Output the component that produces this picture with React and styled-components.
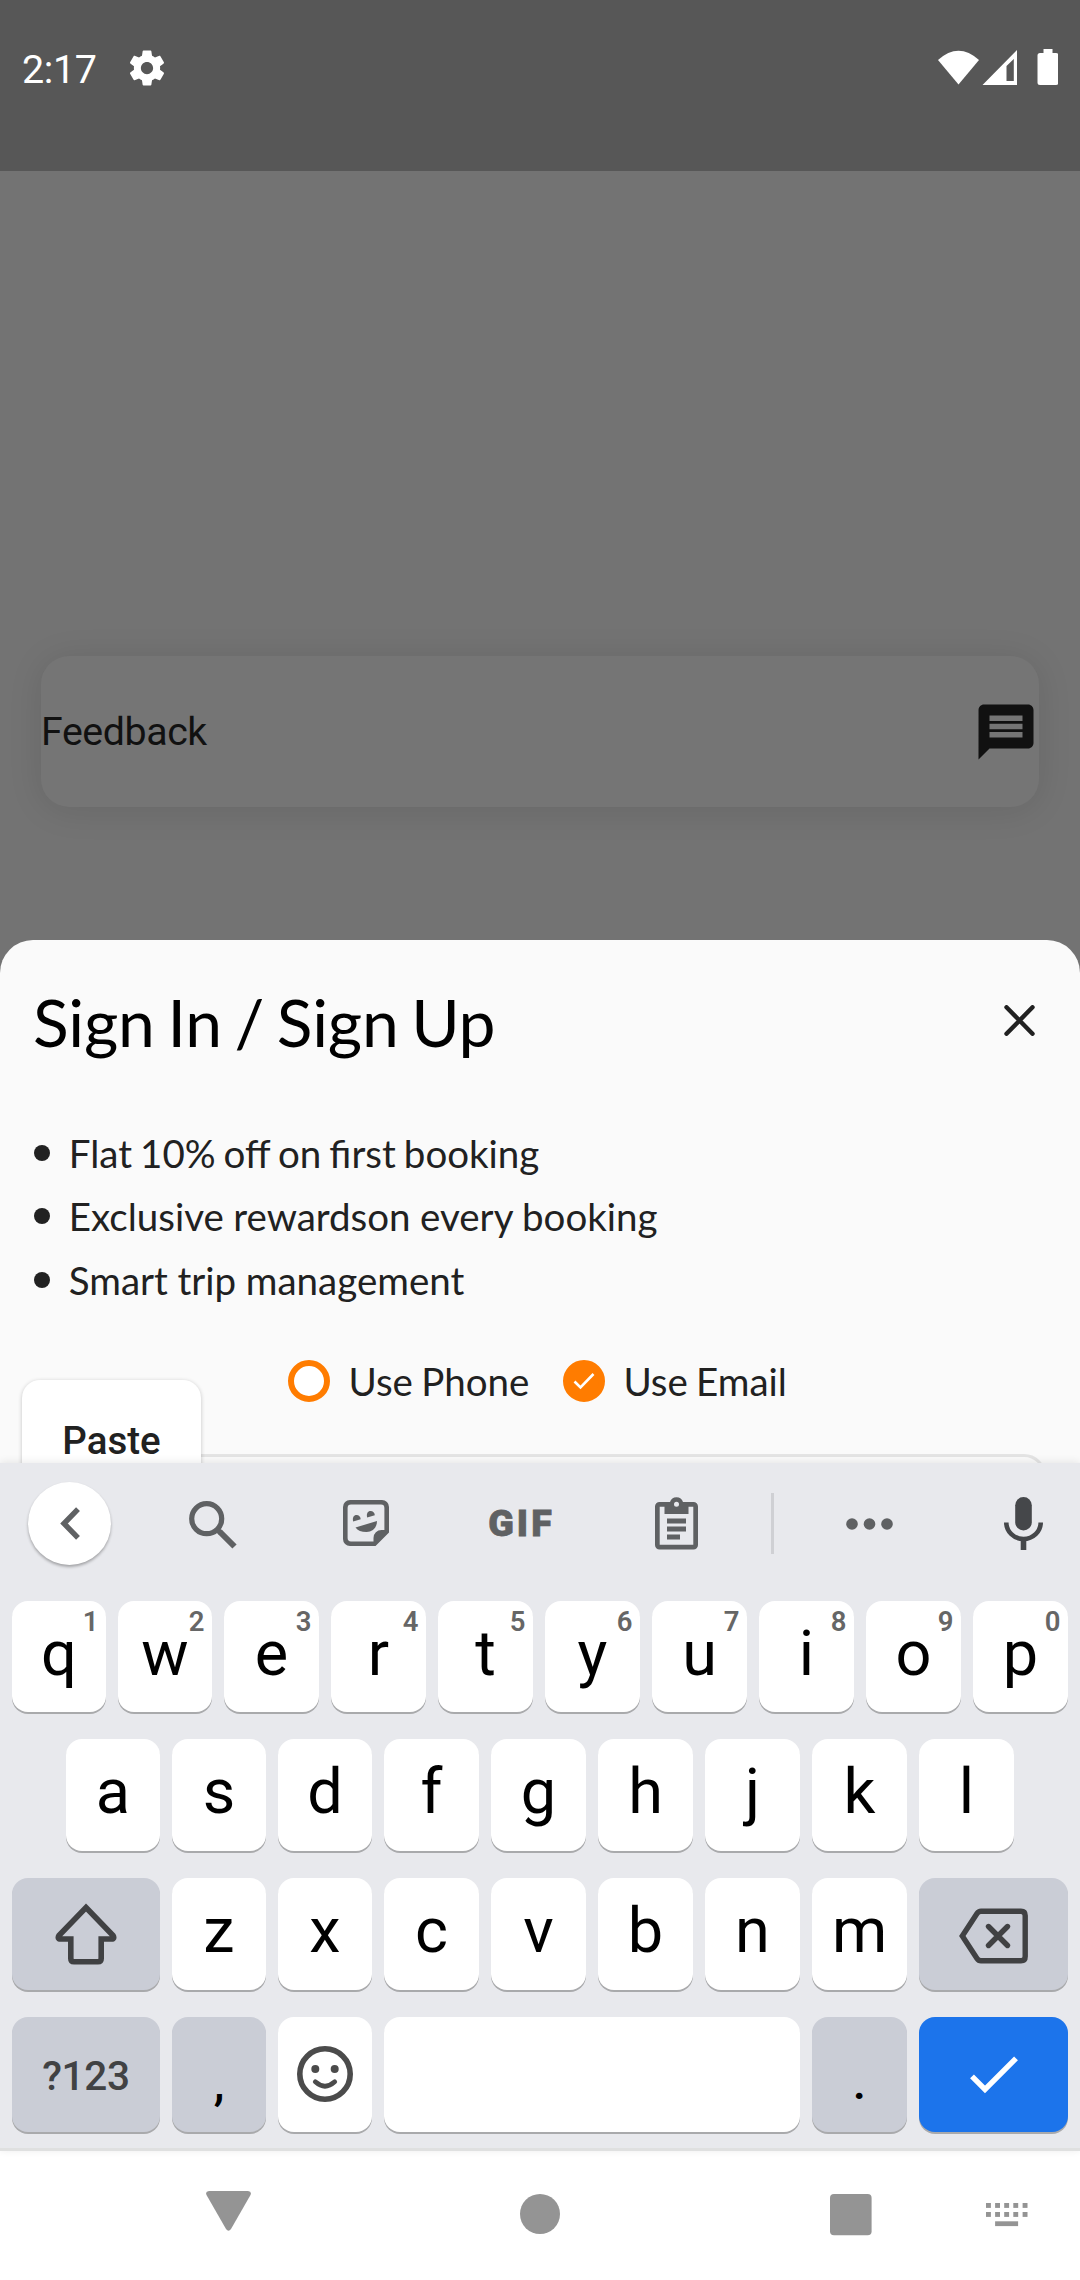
import React from "react";
import styled, { createGlobalStyle } from "styled-components";

const GlobalStyle = createGlobalStyle`
  *, *::before, *::after { box-sizing: border-box; }
  html, body { margin: 0; padding: 0; background: #fff; }
  svg { display: block; flex: none; }
`;

const ROBOTO = `Roboto, "Liberation Sans", sans-serif`;
const LATO = `Lato, "Open Sans", sans-serif`;

const Screen = styled.div`
  display: flex;
  flex-direction: column;
  width: 1080px;
  height: 2280px;
  overflow: hidden;
  font-family: ${ROBOTO};
`;

/* ---------- status bar ---------- */

const StatusBar = styled.header`
  display: flex;
  justify-content: space-between;
  align-items: flex-start;
  height: 171px;
  padding: 39px 22px 0;
  background: #575757;
  color: #fff;
`;

const StatusGroup = styled.div`
  display: flex;
  align-items: center;
  height: 57px;
`;

const Time = styled.span`
  width: 103.5px;
  padding-top: 4px;
  font-size: 39.5px;
  line-height: 53px;
  letter-spacing: -0.4px;
`;

/* ---------- dimmed page ---------- */

const Page = styled.main`
  display: flex;
  flex-direction: column;
  height: 1292px;
  padding-top: 485px;
  background: #737373;
`;

const FeedbackCard = styled.section`
  display: flex;
  align-items: center;
  justify-content: space-between;
  height: 151px;
  margin: 0 41px 132.5px 41px;
  border-radius: 28px;
  background: #757575;
  box-shadow: 0 3px 34px rgba(0, 0, 0, 0.1);
  color: #111;
  font-size: 39.3px;
  letter-spacing: -0.4px;
`;

/* ---------- sign-in sheet ---------- */

const Sheet = styled.section`
  position: relative;
  flex: 1;
  overflow: hidden;
  padding: 42px 34px 0;
  border-radius: 33px 33px 0 0;
  background: #fafafa;
  color: #212121;
  font-family: ${LATO};
`;

const SheetHeader = styled.div`
  display: flex;
  align-items: center;
  justify-content: space-between;
  height: 80px;
  padding-right: 11px;

  svg {
    margin-bottom: 2px;
  }
`;

const Title = styled.h1`
  margin: 0 0 0 -1px;
  color: #000;
  font-size: 66px;
  font-weight: 400;
  line-height: 80px;
  letter-spacing: -0.2px;
  word-spacing: -4px;
  white-space: nowrap;
`;

const PerkList = styled.ul`
  margin: 59.5px 0 0;
  padding: 0;
  list-style: none;
`;

const Perk = styled.li`
  display: flex;
  align-items: center;
  gap: 18.8px;
  height: 63.5px;
  font-size: 38.5px;
  word-spacing: ${(p) => p.$spacing}px;
  white-space: nowrap;

  &::before {
    content: "";
    width: 16px;
    height: 16px;
    border-radius: 50%;
    background: #212121;
  }
`;

const Choices = styled.div`
  display: flex;
  align-items: center;
  gap: 33.5px;
  height: 50px;
  margin-top: 44.5px;
  padding-left: 254px;
`;

const Choice = styled.label`
  display: flex;
  align-items: center;
  gap: 18.5px;
  font-size: 38.5px;
  line-height: 48px;
  word-spacing: -1.5px;
  white-space: nowrap;
`;

const Radio = styled.span`
  display: flex;
  align-items: center;
  justify-content: center;
  width: 42px;
  height: 42px;
  border: 6px solid #ff7c00;
  border-radius: 50%;
  background: ${(p) => (p.$on ? "#ff7c00" : "#fff")};
`;

const EmailField = styled.div`
  height: 120px;
  margin-top: 48px;
  border: 3px solid #e4e4e4;
  border-radius: 22px;
`;

const PastePopup = styled.div`
  position: absolute;
  left: 22px;
  top: 440.5px;
  width: 179px;
  height: 120px;
  border-radius: 18px;
  background: #fff;
  box-shadow: 0 1px 4px rgba(0, 0, 0, 0.22);
  font: 500 38.5px/121px ${ROBOTO};
  text-align: center;
`;

/* ---------- keyboard ---------- */

const Keyboard = styled.section`
  position: relative;
  height: 688px;
  border-bottom: 3px solid #dfe0e0;
  background: #e8e9ed;
  box-shadow: 0 -1px 8px rgba(0, 0, 0, 0.09);
`;

const Toolbar = styled.div`
  display: grid;
  grid-template-columns: 139px 147px 160px 148px 165px 27px 167px 1fr;
  align-items: center;
  justify-items: center;
  height: 138px;
  padding-bottom: 18px;
  color: #5f6163;
`;

const BackButton = styled.button`
  display: flex;
  align-items: center;
  justify-content: center;
  width: 83px;
  height: 83px;
  padding: 0;
  border: 0;
  border-radius: 50%;
  background: #fff;
  color: inherit;
  box-shadow: 0 2px 3px rgba(0, 0, 0, 0.3);
`;

const SearchSlot = styled.span`
  padding-top: 3px;
`;

const GifLabel = styled.span`
  padding-left: 3px;
  font-size: 37.5px;
  font-weight: 900;
  line-height: 40px;
  letter-spacing: 3px;
  -webkit-text-stroke: 0.8px currentColor;
`;

const Divider = styled.span`
  width: 3px;
  height: 61px;
  background: #cfd0d4;
`;

const MicSlot = styled.span`
  padding-left: 14px;
`;

const Keys = styled.div`
  display: grid;
  grid-template-rows: 111px 112px 112px 115px;
  row-gap: 27px;
`;

const KeyRow = styled.div`
  display: flex;
  gap: 12px;
  padding-left: ${(p) => (p.$inset ? 66 : 12)}px;
`;

const keyColors = { light: "#fff", dark: "#cacdd6", accent: "#1c74eb" };

const Key = styled.button`
  position: relative;
  display: flex;
  align-items: center;
  justify-content: center;
  flex: none;
  width: ${(p) => p.$width || 95}px;
  margin: 0;
  padding: 0 0 ${(p) => (p.$lift ? p.$lift : 0)}px;
  border: 0;
  border-radius: 16px;
  background: ${(p) => keyColors[p.$tone || "light"]};
  box-shadow: 0 2px 0 #a9aaac;
  color: #000;
  font: 400 63px/76px ${ROBOTO};

  svg {
    position: relative;
    top: ${(p) => (p.$nudge ? p.$nudge : 0)}px;
  }
`;

const Hint = styled.span`
  position: absolute;
  top: 4px;
  right: 7.5px;
  color: #666;
  font-size: 27.5px;
  font-weight: 600;
  line-height: 33px;
`;

const SymbolsLabel = styled.span`
  padding-top: 2px;
  color: #414244;
  font-size: 40.5px;
  font-weight: 500;
  letter-spacing: -0.3px;
`;

const Punctuation = styled.span`
  padding-top: 17px;
  font-size: 48px;
  font-weight: 500;
`;

/* ---------- navigation bar ---------- */

const NavBar = styled.nav`
  display: flex;
  align-items: flex-start;
  gap: 269px;
  flex: 1;
  padding: 40px 0 0 206px;
  background: #fff;
  color: #949494;
`;

const RecentGroup = styled.div`
  display: flex;
  gap: 114px;
  margin-left: 1px;
`;

/* ---------- icons ---------- */

const Gear = () => (
  <svg width="42" height="42" viewBox="0 0 24 24" fill="currentColor">
    <path d="M19.43 12.98c.04-.32.07-.64.07-.98s-.03-.66-.07-.98l2.11-1.65c.19-.15.24-.42.12-.64l-2-3.46c-.12-.22-.39-.3-.61-.22l-2.49 1c-.52-.4-1.08-.73-1.69-.98l-.38-2.65A.49.49 0 0 0 14 2h-4c-.25 0-.46.18-.49.42l-.38 2.65c-.61.25-1.17.59-1.69.98l-2.49-1c-.23-.09-.49 0-.61.22l-2 3.46c-.13.22-.07.49.12.64l2.11 1.65c-.04.32-.07.65-.07.98s.03.66.07.98l-2.11 1.65c-.19.15-.24.42-.12.64l2 3.46c.12.22.39.3.61.22l2.49-1c.52.4 1.08.73 1.69.98l.38 2.65c.03.24.24.42.49.42h4c.25 0 .46-.18.49-.42l.38-2.65c.61-.25 1.17-.59 1.69-.98l2.49 1c.23.09.49 0 .61-.22l2-3.46c.12-.22.07-.49-.12-.64l-2.11-1.65zM12 15.5c-1.93 0-3.5-1.57-3.5-3.5s1.57-3.5 3.5-3.5 3.500 1.570 3.500 3.500-1.570 3.500-3.500 3.500z" />
  </svg>
);

const StatusIcons = () => (
  <svg width="120" height="37" viewBox="0 0 120 37" fill="#fff">
    <path d="M0 11 Q20.500-7.500 41 11 L20.500 35.500Z" />
    <path fillRule="evenodd" d="M79 1 V36 H44.500Z M75.800 10 L68.500 17 V32 H75.800Z" />
    <path d="M105.500 0 h9 v4 h3.500 a2.500 2.500 0 0 1 2.500 2.500 v27 a2.500 2.500 0 0 1-2.500 2.500 h-16 a2.500 2.500 0 0 1-2.500-2.500 v-27 a2.500 2.500 0 0 1 2.500-2.500 h3.500z" />
  </svg>
);

const MessageIcon = () => (
  <svg width="66" height="66" viewBox="0 0 24 24" fill="#111">
    <path d="M20 2H4c-1.100 0-1.990.9-1.990 2L2 22l4-4h14c1.100 0 2-.9 2-2V4c0-1.100-.9-2-2-2zm-2 12H6v-2h12v2zm0-3H6V9h12v2zm0-3H6V6h12v2z" />
  </svg>
);

const CloseIcon = () => (
  <svg width="31" height="31" viewBox="0 0 31 31" fill="none" stroke="#212121" strokeWidth="4.400" strokeLinecap="round">
    <path d="M2.500 2.300 28.500 28.700M28.500 2.300 2.500 28.700" />
  </svg>
);

const SmallCheck = () => (
  <svg width="22" height="18" viewBox="0 0 22 18" fill="none" stroke="#fff" strokeWidth="2.600">
    <path d="M1.500 9.500 7.500 15.500 20.500 2" />
  </svg>
);

const ChevronIcon = () => (
  <svg width="20" height="33" viewBox="0 0 20 33" fill="none" stroke="currentColor" strokeWidth="5.400">
    <path d="M18 2.200 4 16.500 18 30.800" />
  </svg>
);

const SearchIcon = () => (
  <svg width="48" height="49" viewBox="0 0 48 49" fill="none" stroke="currentColor">
    <circle cx="17.700" cy="18.700" r="15" strokeWidth="5.200" />
    <path d="M28 29.500 32 33" strokeWidth="5" />
    <path d="M30.500 31.500 45.500 46.500" strokeWidth="6" />
  </svg>
);

const StickerIcon = () => (
  <svg width="46" height="46" viewBox="0 0 46 46" fill="currentColor">
    <path
      fillRule="evenodd"
      d="M7 0H39a7 7 0 0 1 7 7V32.500L32.500 46H7a7 7 0 0 1-7-7V7a7 7 0 0 1 7-7z M8 4.600a3.400 3.400 0 0 0-3.400 3.400V38a3.400 3.400 0 0 0 3.400 3.400H30.500V38a8 8 0 0 1 8-8H41.400V8a3.400 3.400 0 0 0-3.400-3.400z"
    />
    <path d="M10.200 21.500C9 17.500 11 15 13.500 15s4 1.800 4.200 4.200z" />
    <path d="M24.200 17.500C23 13.500 25 11 27.500 11s4.200 2 4.300 4.200z" />
    <path d="M12.500 27.500 34 21C34 28 29 32 23.500 32c-5 0-9-1.500-11-4.500z" />
  </svg>
);

const ClipboardIcon = () => (
  <svg width="43" height="53" viewBox="0 0 43 53" fill="currentColor">
    <path
      fillRule="evenodd"
      d="M4.500 5H15a6.800 6.800 0 0 1 13 0H38.500A4.500 4.500 0 0 1 43 9.500V48A4.500 4.500 0 0 1 38.500 52.500H4.500A4.500 4.500 0 0 1 0 48V9.500A4.500 4.500 0 0 1 4.500 5z M4.700 9.700V47.800H38.300V9.700H33.500V17H9.500V9.700z M21.500 4.800a2.500 2.500 0 1 0 0 5 2.500 2.500 0 1 0 0-5z"
    />
    <path d="M12 21.500h19v5H12zM12 29.500h19v5H12zM12 37.500h13v5H12z" />
  </svg>
);

const DotsIcon = () => (
  <svg width="47" height="14" viewBox="0 0 47 14" fill="currentColor">
    <circle cx="6" cy="8" r="5.800" />
    <circle cx="23.500" cy="8" r="5.800" />
    <circle cx="41" cy="8" r="5.800" />
  </svg>
);

const MicIcon = () => (
  <svg width="39" height="53" viewBox="0 0 39 53" fill="#45474a">
    <rect x="11.200" y="0" width="16.600" height="33.500" rx="8.300" />
    <path d="M2.300 25.500a17.200 16.500 0 0 0 34.400 0" fill="none" stroke="#45474a" strokeWidth="4.600" />
    <path d="M16.700 41h5.600v12h-5.600z" />
  </svg>
);

const ShiftIcon = () => (
  <svg width="62" height="62" viewBox="0 0 62 62" fill="none" stroke="#404143" strokeWidth="5.600">
    <path d="M31 4.500 58 32.500Q60 36 56.500 36H46.200V55.500Q46.200 58.700 43 58.700H19Q15.800 58.700 15.800 55.500V36H5.500Q2 36 4 32.500Z" />
  </svg>
);

const DeleteIcon = () => (
  <svg width="69" height="56" viewBox="0 0 69 56" fill="none" stroke="#404143" strokeWidth="5.400">
    <path d="M22 3.200H62Q66.200 3.200 66.200 7.500V48.500Q66.200 52.800 62 52.800H22Q19.500 52.800 18 50.500L3.300 28 18 5.500Q19.500 3.200 22 3.200Z" />
    <path d="M29.500 18.500 48.500 37.500M48.500 18.500 29.500 37.500" strokeLinecap="round" />
  </svg>
);

const SmileyIcon = () => (
  <svg width="56" height="56" viewBox="0 0 56 56" fill="none" stroke="#4b4b4b">
    <circle cx="28" cy="28" r="25.200" strokeWidth="5.600" />
    <circle cx="18.300" cy="23" r="4" fill="#4b4b4b" stroke="none" />
    <circle cx="37.700" cy="23" r="4" fill="#4b4b4b" stroke="none" />
    <path d="M18.300 35.800Q28 44.500 37.700 35.800" strokeWidth="4.800" strokeLinecap="round" />
  </svg>
);

const EnterCheck = () => (
  <svg width="48" height="38" viewBox="0 0 48 38" fill="none" stroke="#fff" strokeWidth="5.400">
    <path d="M2 20.300 15 33.500 46 2.300" />
  </svg>
);

const BackTriangle = () => (
  <svg width="45" height="40" viewBox="0 0 45 40" fill="currentColor">
    <path d="M3 0H42Q46 .5 44.500 4L25 38Q22.500 41.500 20 38L.5 4Q-1 .5 3 0Z" />
  </svg>
);

const HomeCircle = () => (
  <svg width="40" height="44" viewBox="0 0 40 44" fill="currentColor">
    <circle cx="20" cy="23" r="20" />
  </svg>
);

const RecentSquare = () => (
  <svg width="42" height="45" viewBox="0 0 42 45" fill="currentColor">
    <rect x="0" y="3" width="41.600" height="41.300" rx="4" />
  </svg>
);

const KeyboardSwitch = () => (
  <svg width="42" height="36" viewBox="0 0 42 36" fill="currentColor">
    {[12, 21].map((y) =>
      [0, 9.1, 18.2, 27.3, 36.6].map((x) => <rect key={`${x}-${y}`} x={x} y={y} width="4.900" height="4.900" />)
    )}
    <rect x="9.100" y="30.300" width="23" height="4.800" />
  </svg>
);

/* ---------- data ---------- */

const perks = [
  { text: "Flat 10% off on first booking", spacing: -1.8 },
  { text: "Exclusive rewardson every booking", spacing: -0.4 },
  { text: "Smart trip management", spacing: -0.2 },
];

export default function App() {
  return (
    <Screen>
      <GlobalStyle />
      <StatusBar>
        <StatusGroup>
          <Time>2:17</Time>
          <Gear />
        </StatusGroup>
        <StatusGroup>
          <StatusIcons />
        </StatusGroup>
      </StatusBar>

      <Page>
        <FeedbackCard>
          <span>Feedback</span>
          <MessageIcon />
        </FeedbackCard>

        <Sheet>
          <SheetHeader>
            <Title>Sign In / Sign Up</Title>
            <CloseIcon />
          </SheetHeader>
          <PerkList>
            {perks.map((perk) => (
              <Perk key={perk.text} $spacing={perk.spacing}>
                {perk.text}
              </Perk>
            ))}
          </PerkList>
          <Choices>
            <Choice>
              <Radio />
              Use Phone
            </Choice>
            <Choice>
              <Radio $on>
                <SmallCheck />
              </Radio>
              Use Email
            </Choice>
          </Choices>
          <EmailField />
          <PastePopup>Paste</PastePopup>
        </Sheet>
      </Page>

      <Keyboard>
        <Toolbar>
          <BackButton>
            <ChevronIcon />
          </BackButton>
          <SearchSlot>
            <SearchIcon />
          </SearchSlot>
          <StickerIcon />
          <GifLabel>GIF</GifLabel>
          <ClipboardIcon />
          <Divider />
          <DotsIcon />
          <MicSlot>
            <MicIcon />
          </MicSlot>
        </Toolbar>
        <Keys>
          <KeyRow>
            {[..."qwertyuiop"].map((letter, i) => (
              <Key key={letter} $width={i < 2 ? 94 : 95} $lift={6}>
                {letter}
                <Hint>{(i + 1) % 10}</Hint>
              </Key>
            ))}
          </KeyRow>
          <KeyRow $inset>
            {[..."asdfghjkl"].map((letter, i) => (
              <Key key={letter} $width={i < 3 ? 94 : 95} $lift={6}>
                {letter}
              </Key>
            ))}
          </KeyRow>
          <KeyRow>
            <Key $width={148} $tone="dark" $nudge={-0.5}>
              <ShiftIcon />
            </Key>
            {[..."zxcvbnm"].map((letter, i) => (
              <Key key={letter} $width={i < 2 ? 94 : 95} $lift={6}>
                {letter}
              </Key>
            ))}
            <Key $width={149} $tone="dark" $nudge={2}>
              <DeleteIcon />
            </Key>
          </KeyRow>
          <KeyRow>
            <Key $width={148} $tone="dark">
              <SymbolsLabel>?123</SymbolsLabel>
            </Key>
            <Key $width={94} $tone="dark">
              <Punctuation>,</Punctuation>
            </Key>
            <Key $width={94} $lift={2}>
              <SmileyIcon />
            </Key>
            <Key $width={416} />
            <Key $tone="dark">
              <Punctuation>.</Punctuation>
            </Key>
            <Key $width={149} $tone="accent">
              <EnterCheck />
            </Key>
          </KeyRow>
        </Keys>
      </Keyboard>

      <NavBar>
        <BackTriangle />
        <HomeCircle />
        <RecentGroup>
          <RecentSquare />
          <KeyboardSwitch />
        </RecentGroup>
      </NavBar>
    </Screen>
  );
}
